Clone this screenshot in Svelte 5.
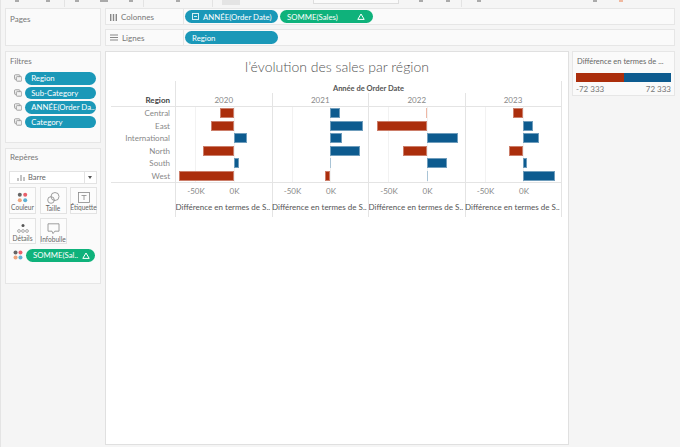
<script lang="ts">
  const filters = ['Region', 'Sub-Category', 'ANNÉE(Order Da..', 'Category'];
  const years = ['2020', '2021', '2022', '2023'];

  // pixel extents per year, relative to the zero line of the pane
  const rows = [
    { name: 'Central', v: [-13.5, 9.5, -1, -10] },
    { name: 'East', v: [-22.5, 33, -49.5, 10] },
    { name: 'International', v: [13, 11.5, 31, 16] },
    { name: 'North', v: [-30.5, 30, -24, -14] },
    { name: 'South', v: [5, 1, 20, 3.5] },
    { name: 'West', v: [-55, -5, 1, 32] },
  ];

  const ZERO = 58.5;
  const FIFTY = 38.5;

  function barStyle(v: number) {
    const left = v < 0 ? ZERO + v : ZERO;
    return `left:${left}px;width:${Math.abs(v)}px`;
  }
</script>

<div class="page">
  <div class="toolbar">
    <div class="seg" style="width:64px"><i></i><i></i></div>
    <div class="seg" style="width:79px"><i></i><i class="wide"></i><i></i></div>
    <div class="seg" style="width:69px"><i></i></div>
    <div class="seg sel-seg" style="width:100px"><b class="active"></b></div>
    <div class="toolselect"></div>
    <div class="seg" style="width:54px"><i></i><i></i></div>
    <div class="seg last"><i></i><i class="far"></i><i class="orange"></i></div>
  </div>

  <div class="workspace">
    <aside class="side">
      <section class="card pages"><h3>Pages</h3></section>

      <section class="card filtres">
        <h3>Filtres</h3>
        <ul>
          {#each filters as f}
            <li>
              <svg width="9" height="8" viewBox="0 0 9 8" fill="#f2f2f2" stroke="#999">
                <rect x="0.5" y="0.5" width="6" height="5" rx="1" />
                <rect x="2.5" y="2.5" width="6" height="5" rx="1" />
              </svg>
              <span class="pill blue filter-pill">{f}</span>
            </li>
          {/each}
        </ul>
      </section>

      <section class="card reperes">
        <h3>Repères</h3>
        <div class="select">
          <svg width="8" height="7" viewBox="0 0 8 7" stroke="#888"><path d="M1 7V4M4 7V1M7 7V3" /></svg>
          <span>Barre</span>
          <div class="caret"></div>
        </div>
        <div class="marks">
          <div class="mark">
            <svg width="11" height="11" viewBox="0 0 11 11">
              <circle cx="2.8" cy="2.8" r="2" fill="#666" /><circle cx="8.2" cy="2.8" r="2" fill="#e8606b" />
              <circle cx="2.8" cy="8.2" r="2" fill="#eea47c" /><circle cx="8.2" cy="8.2" r="2" fill="#5fb0d3" />
            </svg>
            <span>Couleur</span>
          </div>
          <div class="mark">
            <svg width="13" height="12" viewBox="0 0 13 12" fill="none" stroke="#888" stroke-width="0.8">
              <circle cx="4" cy="8" r="3.3" /><circle cx="8" cy="4.5" r="4" />
            </svg>
            <span>Taille</span>
          </div>
          <div class="mark">
            <svg width="12" height="11" viewBox="0 0 12 11" fill="none" stroke="#888" stroke-width="0.8">
              <rect x="0.5" y="0.5" width="11" height="10" />
              <path d="M3.5 3.5h5M6 3.5v4.5" />
            </svg>
            <span>Étiquette</span>
          </div>
          <div class="mark">
            <svg width="12" height="11" viewBox="0 0 12 11" fill="none" stroke="#888" stroke-width="0.7">
              <circle cx="6" cy="2.5" r="1.5" fill="#555" stroke="none" />
              <circle cx="2" cy="8" r="1.4" /><circle cx="6" cy="8" r="1.4" /><circle cx="10" cy="8" r="1.4" />
            </svg>
            <span>Détails</span>
          </div>
          <div class="mark">
            <svg width="13" height="12" viewBox="0 0 13 12" fill="none" stroke="#888" stroke-width="0.8">
              <path d="M1 .8h11v7.4H7.8L6 10.6 5 8.2H1z" />
            </svg>
            <span>Infobulle</span>
          </div>
        </div>
        <div class="encoding">
          <svg width="10" height="10" viewBox="0 0 11 11">
            <circle cx="2.8" cy="2.8" r="2.2" fill="#666" /><circle cx="8.2" cy="2.8" r="2.2" fill="#e8606b" />
            <circle cx="2.8" cy="8.2" r="2.2" fill="#eea47c" /><circle cx="8.2" cy="8.2" r="2.2" fill="#5fb0d3" />
          </svg>
          <span class="pill green enc-pill">
            <span>SOMME(Sal..</span>
            <svg class="delta" width="8" height="7" viewBox="0 0 8 7" fill="none" stroke="#fff"><path d="M4 1 7.2 6.4H.8z" /></svg>
          </span>
        </div>
      </section>
    </aside>

    <div class="main">
      <div class="shelf">
        <div class="shelf-label">
          <svg width="7" height="8" viewBox="0 0 7 8" fill="#888"><rect x="0" y="1" width="1.4" height="7" /><rect x="2.8" y="1" width="1.4" height="7" /><rect x="5.6" y="1" width="1.4" height="7" /></svg>
          <span>Colonnes</span>
        </div>
        <div class="shelf-pills">
          <span class="pill blue shelf-pill">
            <svg width="7" height="7" viewBox="0 0 7 7" fill="none" stroke="#d5eef4"><rect x="0.5" y="0.5" width="6" height="6" /><path d="M2 3.5h3" /></svg>
            ANNÉE(Order Date)
          </span>
          <span class="pill green shelf-pill">
            <span>SOMME(Sales)</span>
            <svg class="delta" width="8" height="7" viewBox="0 0 8 7" fill="none" stroke="#fff"><path d="M4 1 7.2 6.4H.8z" /></svg>
          </span>
        </div>
      </div>
      <div class="shelf">
        <div class="shelf-label">
          <svg width="8" height="7" viewBox="0 0 8 7" stroke="#888"><path d="M0 1h8M0 3.5h8M0 6h8" /></svg>
          <span>Lignes</span>
        </div>
        <div class="shelf-pills"><span class="pill blue shelf-pill">Region</span></div>
      </div>

      <div class="content">
        <div class="view">
          <h1>l’évolution des sales par région</h1>
          <div class="chart">
            <div class="chart-head"><span>Année de Order Date</span></div>
            <div class="row year-row">
              <div class="row-label region-head">Region</div>
              {#each years as y}<div class="pane year">{y}</div>{/each}
            </div>
            <div class="rows">
              {#each rows as r}
                <div class="row data-row">
                  <div class="row-label">{r.name}</div>
                  {#each r.v as v}
                    <div class="pane">
                      <div class="grid" style="left:{ZERO - FIFTY}px"></div>
                      <div class="grid" style="left:{ZERO}px"></div>
                      <div class="bar" class:neg={v < 0} class:thin={Math.abs(v) < 2} style={barStyle(v)}></div>
                    </div>
                  {/each}
                </div>
              {/each}
            </div>
            <div class="row axis-row">
              <div class="row-label"></div>
              {#each years as y}
                <div class="pane axis">
                  <div class="ticks">
                    <span style="left:{ZERO - FIFTY}px">-50K</span>
                    <span style="left:{ZERO}px">0K</span>
                  </div>
                  <div class="axis-title">Différence en termes de S..</div>
                </div>
              {/each}
            </div>
          </div>
        </div>

        <div class="legend-col">
          <div class="card legend">
            <div class="legend-title">Différence en termes de ...</div>
            <div class="ramp"><div class="ramp-neg"></div><div class="ramp-pos"></div></div>
            <div class="ramp-labels"><span>-72 333</span><span>72 333</span></div>
          </div>
        </div>
      </div>
    </div>
  </div>
</div>

<style>
  :global(body) { margin: 0; background: #f5f5f5; }

  .page { width: 680px; height: 447px; overflow: hidden; background: #f5f5f5; font-family: "Lato", "Open Sans", sans-serif; color: #666; border-left: 1px solid #e4e4e4; box-sizing: border-box; }

  .toolbar { display: flex; height: 8px; }
  .seg { display: flex; justify-content: space-around; align-items: flex-start; border-right: 1px solid #e3e3e3; height: 7px; box-sizing: border-box; }
  .seg i { display: block; width: 4px; height: 2px; background: #aaa; }
  .seg i.wide { width: 8px; }
  .seg i.orange { background: #f0b9a0; margin-left: -90px; }
  .seg.last { flex: 1; border-right: none; justify-content: flex-start; gap: 112px; padding-left: 15px; }
  .sel-seg { justify-content: flex-start; padding-left: 9px; border-right: none; }
  .active { display: block; width: 18px; height: 5px; background: #e4e4e4; }
  .toolselect { width: 84px; height: 3px; border: 1px solid #ddd; border-top: none; background: #fafafa; margin-right: 9px; }

  .workspace { display: flex; gap: 4px; padding: 0 4px; height: 439px; }
  .side { width: 96px; flex: none; display: flex; flex-direction: column; gap: 5px; }
  .card { background: #fafafa; border: 1px solid #e6e6e6; box-sizing: border-box; }
  h3 { margin: 0; font-size: 8px; font-weight: 400; color: #777; line-height: 10px; }
  .pages { height: 38px; padding: 5px 4px; }
  .filtres { height: 92px; padding: 4px 4px; }
  .filtres ul { list-style: none; margin: 6px 0 0; padding: 0; display: flex; flex-direction: column; gap: 2px; }
  .filtres li { display: flex; align-items: center; gap: 3px; padding-left: 4px; }
  .reperes { height: 136px; padding: 3px 3px; }
  .reperes h3 { padding-left: 1px; }

  .pill { display: flex; align-items: center; height: 12.5px; border-radius: 7px; color: #fff; font-size: 7.8px; box-sizing: border-box; white-space: nowrap; }
  .blue { background: #1a98b8; }
  .green { background: #0fb27b; }
  .filter-pill { width: 77px; padding-left: 6px; }

  .select { display: flex; align-items: center; gap: 3px; height: 13px; margin-top: 9px; padding-left: 7px; background: #fff; border: 1px solid #e3e3e3; box-sizing: border-box; font-size: 7.5px; }
  .caret { margin-left: auto; width: 11px; height: 100%; border-left: 1px solid #e3e3e3; position: relative; }
  .caret::after { content: ''; position: absolute; left: 3px; top: 4px; border: 2.5px solid transparent; border-top: 3px solid #555; }
  .marks { display: grid; grid-template-columns: repeat(3, 27px); gap: 4px 3.5px; margin-top: 3px; }
  .mark { height: 26.5px; box-sizing: border-box; padding: 4px 0 1.5px; border: 1px solid #e3e3e3; background: #fcfcfc; display: flex; flex-direction: column; align-items: center; justify-content: space-between; font-size: 6.6px; line-height: 9px; white-space: nowrap; }
  .mark svg { flex: none; }
  .encoding { display: flex; align-items: center; gap: 3px; margin-top: 5px; padding-left: 4px; }
  .enc-pill { width: 69px; padding: 0 5px 0 7px; justify-content: space-between; }

  .main { width: 570px; display: flex; flex-direction: column; gap: 4px; }
  .shelf { display: flex; height: 17px; background: #fafafa; border: 1px solid #e6e6e6; box-sizing: border-box; }
  .shelf-label { width: 78px; display: flex; align-items: center; gap: 4px; padding-left: 4px; box-sizing: border-box; border-right: 1px solid #e6e6e6; font-size: 8px; color: #777; }
  .shelf-pills { display: flex; align-items: center; gap: 2px; padding-left: 1px; }
  .shelf-pill { width: 93px; padding: 0 5px 0 7px; gap: 4px; }
  .green.shelf-pill { justify-content: space-between; padding-right: 8px; }

  .content { display: flex; gap: 3px; flex: 1; margin-top: 1px; }
  .view { width: 464px; height: 394px; background: #fff; border: 1px solid #e0e0e0; box-sizing: border-box; }
  h1 { margin: 6px 0 0; font-size: 14px; line-height: 18px; font-weight: 300; color: #555; text-align: center; }

  .chart { margin: 5px 0 0 5px; width: 451px; }
  .chart-head { height: 12px; margin-left: 64px; border-left: 1px solid #e4e4e4; border-right: 1px solid #e4e4e4; text-align: center; font-size: 7.5px; font-weight: 700; color: #555; line-height: 15px; }
  .row { display: grid; grid-template-columns: 64px repeat(4, 96.5px); }
  .row-label { font-size: 8px; line-height: 12.5px; text-align: right; padding-right: 5px; color: #888; }
  .region-head { font-weight: 700; color: #444; line-height: 14px; }
  .pane { position: relative; border-left: 1px solid #e4e4e4; box-sizing: border-box; }
  .row > .pane:last-child { border-right: 1px solid #e4e4e4; width: 97px; }
  .year { text-align: center; font-size: 8px; line-height: 14px; color: #888; }
  .year-row { border-bottom: 1px solid #e4e4e4; box-sizing: border-box; height: 14px; }
  .data-row { height: 12.5px; }
  .rows { border-bottom: 1px solid #e4e4e4; }
  .grid { position: absolute; top: 0; bottom: 0; width: 1px; background: #f2f2f2; margin-left: -1px; }
  .bar { position: absolute; top: 1.2px; height: 10px; background: #0d5b8f; border: 1px solid #6f9dbc; box-sizing: border-box; margin-left: -1px; }
  .bar.neg { background: #ab2e0c; border-color: #cc7e6a; }
  .bar.thin { border: none; background: #a9c4d6; width: 1px; }
  .bar.thin.neg { background: #eeb8a6; }

  .axis-row { height: 34px; }
  .ticks { height: 19px; position: relative; }
  .ticks span { position: absolute; top: 3px; transform: translateX(-50%); font-size: 8px; line-height: 10px; color: #888; }
  .axis-title { font-size: 8px; line-height: 10px; color: #555; white-space: nowrap; overflow: hidden; margin-left: -0.5px; }

  .legend-col { width: 103px; }
  .legend { height: 45px; padding: 5px 3px 0 3px; }
  .legend-title { font-size: 7.5px; line-height: 10px; padding-left: 1px; white-space: nowrap; }
  .ramp { display: flex; height: 9px; margin-top: 6px; }
  .ramp-neg { width: 48px; background: #ab2e0c; }
  .ramp-pos { flex: 1; background: #0d5b8f; }
  .ramp-labels { display: flex; justify-content: space-between; font-size: 8px; line-height: 11px; margin-top: 2px; color: #777; }
</style>
